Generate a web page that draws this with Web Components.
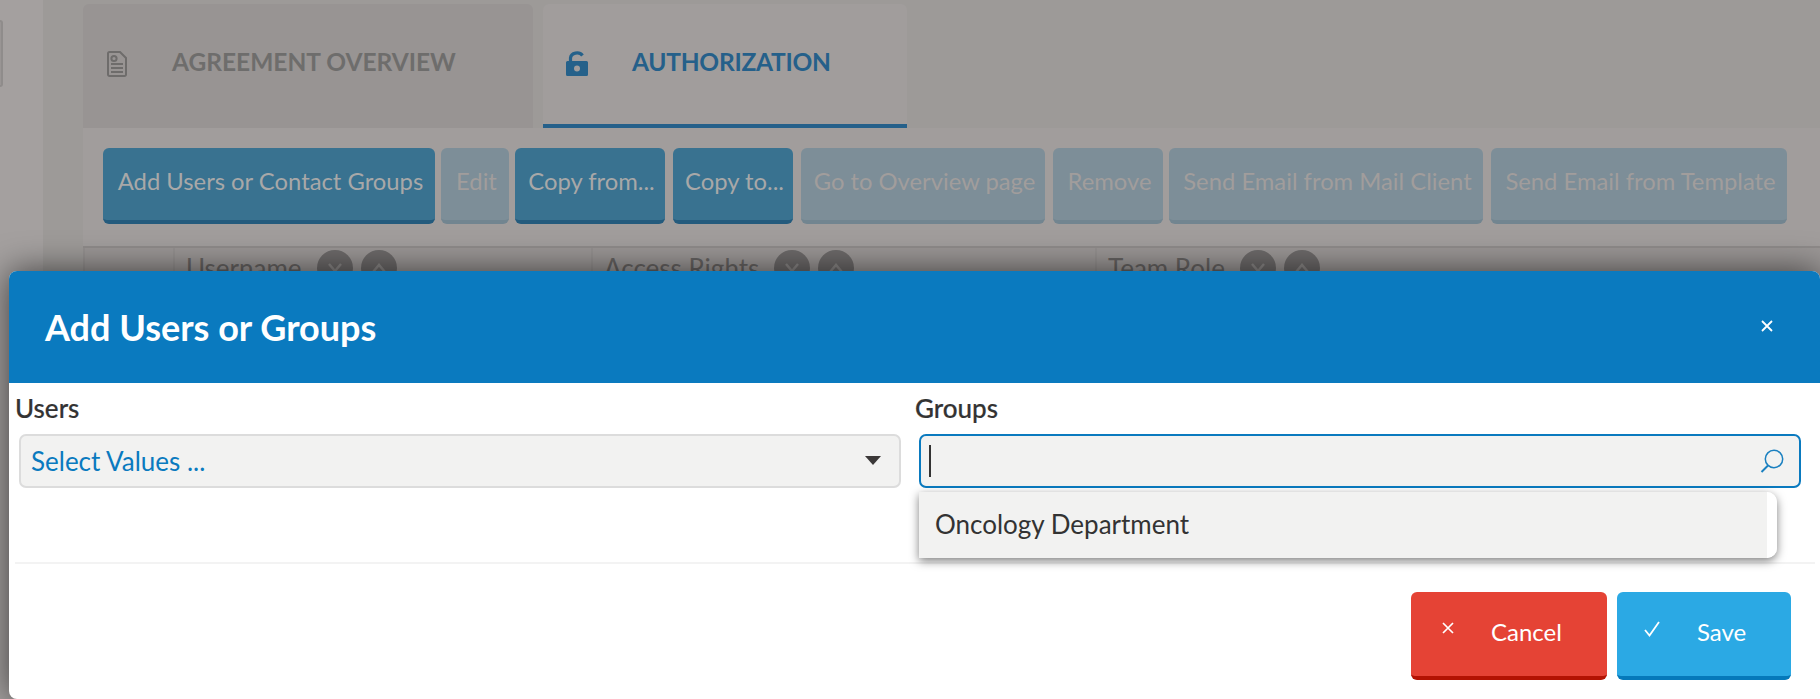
<!DOCTYPE html>
<html lang="en"><head><meta charset="utf-8"><title>Add Users or Groups</title>
<style>
html,body{margin:0;height:699px;overflow:hidden;font-family:"Lato","Liberation Sans",sans-serif;background:#9d9a98}
</style></head><body>
<x-app>
  <x-tabs>
    <x-tab icon="doc">AGREEMENT OVERVIEW</x-tab>
    <x-tab icon="lock" active>AUTHORIZATION</x-tab>
  </x-tabs>
  <x-toolbar>
    <x-btn w="332">Add Users or Contact Groups</x-btn>
    <x-btn w="68" off gap="6">Edit</x-btn>
    <x-btn w="150" gap="6">Copy from...</x-btn>
    <x-btn w="120" gap="8">Copy to...</x-btn>
    <x-btn w="244" off gap="8">Go to Overview page</x-btn>
    <x-btn w="110" off gap="8">Remove</x-btn>
    <x-btn w="314" off gap="6">Send Email from Mail Client</x-btn>
    <x-btn w="296" off gap="8">Send Email from Template</x-btn>
  </x-toolbar>
  <x-thead>
    <span></span>
    <x-th>Username</x-th>
    <x-th>Access Rights</x-th>
    <x-th>Team Role</x-th>
  </x-thead>
</x-app>
<x-modal heading="Add Users or Groups">
  <x-field label="Users"><x-select>Select Values ...</x-select></x-field>
  <x-field label="Groups"><x-search><x-option>Oncology Department</x-option></x-search></x-field>
  <x-action slot="footer" kind="cancel">Cancel</x-action>
  <x-action slot="footer" kind="save">Save</x-action>
</x-modal>
<script>
const def=(name,html,init)=>customElements.define(name,class extends HTMLElement{
  constructor(){super();this.attachShadow({mode:'open'}).innerHTML=html;}
  connectedCallback(){init&&init(this,this.shadowRoot);}
});
def('x-app',`<style>
:host{display:grid;grid-template-columns:43px 1fr;height:699px}
.rail{background:#a4a09f}
.rail i{display:block;width:1px;height:63px;margin-top:20px;background:#999594;border:2px solid #8f8c8b;border-left:0;border-radius:0 4px 4px 0}
.main{padding:4px 0 0 40px;min-width:0}
</style><div class="rail"><i></i></div><div class="main"><slot></slot></div>`);
def('x-tabs',`<style>:host{display:flex;gap:10px;height:124px}</style><slot></slot>`);
const icons={
 doc:`<svg width="20" height="26" viewBox="0 0 20 26" fill="none" stroke="#6e6c6b" stroke-width="2"><path d="M1 2.5a1.5 1.5 0 0 1 1.5-1.5H13l6 6v16.500a1.500 1.500 0 0 1-1.500 1.500h-15A1.500 1.500 0 0 1 1 23.500z"/><circle cx="7" cy="7.500" r="2.600"/><path d="M4 13h12M4 17h12M4 21h12"/></svg>`,
 lock:`<svg width="22" height="25" viewBox="0 0 22 25"><path fill="none" stroke="#25618a" stroke-width="3.200" d="M4.500 11V7a6.500 5.500 0 0 1 12-2.500"/><path fill="#25618a" fill-rule="evenodd" d="M1.500 10h19a1.500 1.500 0 0 1 1.500 1.500V23.500a1.500 1.500 0 0 1-1.500 1.500h-19A1.500 1.500 0 0 1 0 23.500V11.500A1.500 1.500 0 0 1 1.500 10zM11 14.500a3 3 0 1 0 0 6a3 3 0 0 0 0-6z"/></svg>`};
def('x-tab',`<style>
:host{display:flex;align-items:flex-start;box-sizing:border-box;height:124px;width:450px;padding:43px 0 0 24px;background:#989493;border-radius:6px 6px 0 0;color:#6e6d6c;font:700 24.500px/30px "Lato",sans-serif}
:host([active]){width:364px;padding-left:23px;background:#a19d9c;color:#25608a;border-bottom:4px solid #25608a;letter-spacing:-.25px}
#i{flex:none;width:65px;height:26px;margin-top:4px;display:block}
:host([active]) #i{width:66px}
</style><span id="i"></span><slot></slot>`,(h,s)=>{s.getElementById('i').innerHTML=icons[h.getAttribute('icon')]});
def('x-toolbar',`<style>:host{display:flex;box-sizing:border-box;height:120px;padding:20px 0 0 20px;background:#a19d9c;border-bottom:2px solid #8f8b8a}</style><slot></slot>`);
def('x-btn',`<style>
:host{display:block;flex:none;box-sizing:border-box;height:76px;padding-left:3px;text-align:center;white-space:nowrap;background:#397290;border-bottom:4px solid #245b7d;border-radius:6px;color:#a8a8a8;font:400 23.800px/67px "Lato",sans-serif}
:host([off]){background:#7d8e98;border-bottom-color:#728590;color:#a19d9c}
</style><slot></slot>`,h=>{h.style.width=h.getAttribute('w')+'px';h.style.marginLeft=(h.getAttribute('gap')||0)+'px'});
def('x-thead',`<style>
:host{display:grid;grid-template-columns:90px 418px 504px 703px 1fr;height:60px;background:#9b9796;overflow:hidden}
::slotted(span){border-left:2px solid #959190}
</style><slot></slot>`);
def('x-th',`<style>
:host{display:flex;align-items:flex-start;box-sizing:border-box;padding:2px 0 0 11px;border-left:2px solid #959190;color:#666362;font:400 26px/36px "Lato",sans-serif}
b{flex:none;width:36px;height:36px;border-radius:50%;background:#6d6a6a;display:flex;align-items:center;justify-content:center}
b:first-of-type{margin-left:15px}
b+b{margin-left:8px}
</style><slot></slot>
<b><svg width="16" height="10" viewBox="0 0 16 10" fill="none" stroke="#8b8887" stroke-width="2.500"><path d="M2 1l6 7 6-7"/></svg></b>
<b><svg width="16" height="10" viewBox="0 0 16 10" fill="none" stroke="#8b8887" stroke-width="2.500"><path d="M2 9l6-7 6 7"/></svg></b>`);
def('x-modal',`<style>
:host{display:flex;flex-direction:column;position:absolute;left:9px;top:271px;right:0;height:428px;background:#fff;border-radius:8px 8px 0 8px;box-shadow:0 0 34px rgba(0,0,0,.62);color:#333}
header{display:flex;align-items:center;justify-content:space-between;box-sizing:border-box;height:112px;padding:0 47px 0 36px;background:#0a7abf;border-radius:8px 8px 0 0}
h2{margin:-1px 0 0;color:#fff;font:700 36px/44px "Lato",sans-serif}
svg{display:block;margin-top:-2px}
.body{display:grid;grid-template-columns:900px 1fr;box-sizing:border-box;height:179px;padding:0 0 0 6px}
hr{height:2px;margin:0 5px 0 6px;border:0;background:#f3f3f3}
footer{display:flex;justify-content:flex-end;gap:10px;padding:28px 29px 0 0}
</style>
<header><h2 id="t"></h2><svg width="12" height="12" viewBox="0 0 12 12" stroke="#fff" stroke-width="1.800"><path d="M1 1l10 10M11 1L1 11"/></svg></header>
<div class="body"><slot></slot></div><hr><footer><slot name="footer"></slot></footer>`,(h,s)=>{s.getElementById('t').textContent=h.getAttribute('heading')});
def('x-field',`<style>
:host{display:block;min-width:0;position:relative}
label{display:block;height:51px;color:#333;font:500 26px/50px "Lato",sans-serif;-webkit-text-stroke:.2px #333}
.c{margin-left:4px;width:882px}
</style><label id="l"></label><div class="c"><slot></slot></div>`,(h,s)=>{s.getElementById('l').textContent=h.getAttribute('label')});
def('x-select',`<style>
:host{display:flex;align-items:center;justify-content:space-between;box-sizing:border-box;height:54px;padding:0 18px 0 10px;background:#f2f2f1;border:2px solid #dcdcdc;border-radius:7px;color:#0a7abf;font:400 26px/50px "Lato",sans-serif}
i{flex:none;margin-top:-2px;width:0;height:0;border:8px solid transparent;border-top:9px solid #3b3838;border-bottom:0}
</style><span><slot></slot></span><i></i>`);
def('x-search',`<style>
:host{display:block;position:relative;box-sizing:border-box;height:54px;background:#f2f2f1;border:2px solid #0a7abf;border-radius:7px}
.row{display:flex;align-items:center;justify-content:space-between;height:100%;padding:0 15px 0 8px}
i{display:block;width:2px;height:32px;background:#333}
.menu{position:absolute;left:-2px;top:56px;width:858px}
</style><div class="row"><i></i><svg width="24" height="24" viewBox="0 0 24 24" fill="none" stroke="#1a80c0" stroke-width="1.500"><circle cx="14" cy="10" r="8.700"/><path d="M8 16.500L1.500 23" stroke-width="2"/></svg></div><div class="menu"><slot></slot></div>`);
def('x-option',`<style>
:host{display:block;box-sizing:border-box;height:66px;padding-left:16px;padding-right:10px;background:linear-gradient(90deg,#f2f2f1 calc(100% - 10px),#fff 0);border-radius:0 10px 10px 0;box-shadow:0 3px 10px rgba(0,0,0,.5);color:#333;font:400 26px/64px "Lato",sans-serif}
</style><slot></slot>`);
def('x-action',`<style>
:host{display:flex;align-items:flex-start;box-sizing:border-box;height:88px;padding:24px 0 0 31px;border-radius:6px;white-space:nowrap;color:#fff;font:400 24px/32px "Lato",sans-serif}
:host([kind=cancel]){width:196px;background:#e54335;border-bottom:4px solid #b31303}
:host([kind=save]){width:174px;padding-left:27px;background:#2ba9e4;border-bottom:4px solid #0579ba}
span{flex:none;display:block}
:host([kind=cancel]) span{width:49px;padding:6px 0 0 0}
:host([kind=save]) span{width:53px;padding:5px 0 0 0}
svg{display:block}
</style><span id="i"></span><slot></slot>`,(h,s)=>{s.getElementById('i').innerHTML=h.getAttribute('kind')=='cancel'
 ?`<svg width="12" height="12" viewBox="0 0 12 12" stroke="#fff" stroke-width="1.700"><path d="M1 1l10 10M11 1L1 11"/></svg>`
 :`<svg width="16" height="16" viewBox="0 0 16 16" fill="none" stroke="#fff" stroke-width="1.800"><path d="M1 9l4.500 5.500L15 1"/></svg>`});
</script>
</body></html>
